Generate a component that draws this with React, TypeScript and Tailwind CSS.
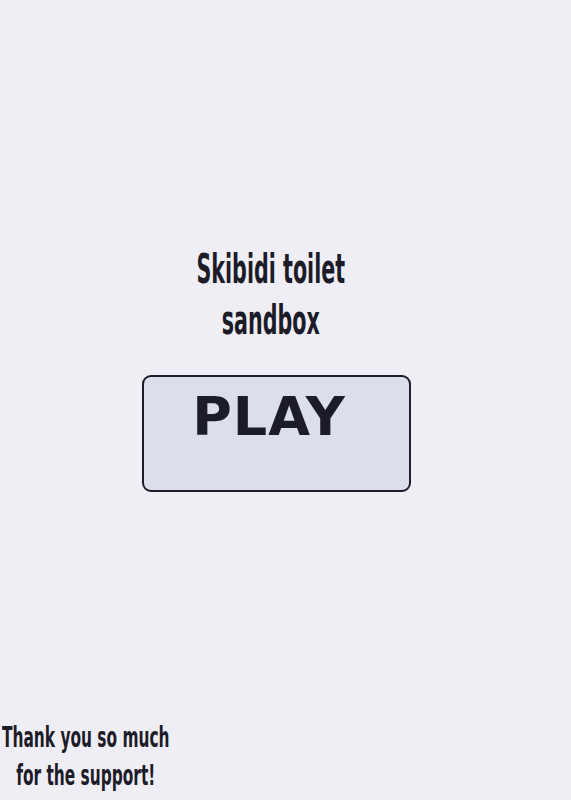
import React from 'react';

// Title screen: game name, a big PLAY button and a thank-you note in the corner
const narrow = { fontFamily: '"DejaVu Sans Condensed", "DejaVu Sans", sans-serif' };

export default function App() {
  return (
    <div className="flex h-[800px] w-full flex-col bg-[#efeef4] text-[#1c1c28]">
      <div className="flex flex-1 flex-col items-center pt-[244px]">
        <div className="ml-[-30px] flex flex-col items-center">
          <h1
            className="origin-center scale-x-[0.56] whitespace-nowrap text-center text-[41px] leading-[51px] font-bold"
            style={narrow}
          >
            Skibidi toilet
            <br />
            sandbox
          </h1>
        </div>
        <button className="ml-[-19px] mt-[29px] flex h-[117px] w-[269px] items-start justify-center rounded-[9px] border-2 border-[#1c1c28] bg-[#dcdeea] pr-[14px] pt-[10px]">
          <span
            className="text-[54px] leading-[60px] font-bold tracking-[1px]"
            style={{ fontFamily: '"DejaVu Sans", Verdana, sans-serif' }}
          >
            PLAY
          </span>
        </button>
      </div>
      <div className="pb-[6px] pl-[2px]">
        <p
          className="inline-block origin-left scale-x-[0.59] whitespace-nowrap text-center text-[29px] leading-[38px] font-bold"
          style={narrow}
        >
          Thank you so much
          <br />
          for the support!
        </p>
      </div>
    </div>
  );
}
